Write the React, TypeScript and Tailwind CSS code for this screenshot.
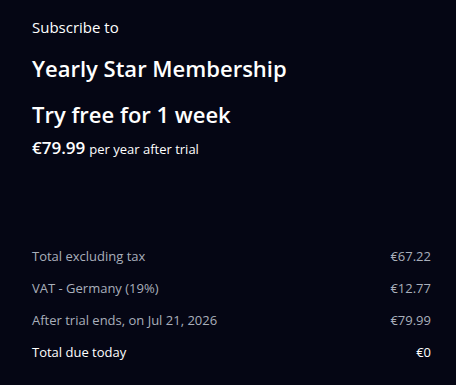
const rows = [
  { label: 'Total excluding tax', value: '€67.22' },
  { label: 'VAT - Germany (19%)', value: '€12.77' },
  { label: 'After trial ends, on Jul 21, 2026', value: '€79.99' },
]

export default function App() {
  return (
    <div
      className="h-[385px] w-[456px] bg-[#050614] pl-8 pr-[25px] text-white"
      style={{ fontFamily: '"Open Sans", "Noto Sans", sans-serif' }}
    >
      {/* Header */}
      <div className="pt-[17px]">
        <div className="text-[15px] leading-[20px]">Subscribe to</div>
        <h1 className="mt-[16px] text-[22px] font-semibold leading-[30px]">Yearly Star Membership</h1>
        <h2 className="mt-[15px] text-[22px] font-semibold leading-[32px]">Try free for 1 week</h2>
        <div className="mt-[5px] flex items-baseline gap-1">
          <span className="text-[17px] font-semibold">€79.99</span>
          <span className="text-[13px]">per year after trial</span>
        </div>
      </div>

      {/* Summary */}
      <div className="mt-[80px] flex flex-col text-[13px]">
        {rows.map((row) => (
          <div key={row.label} className="flex h-8 items-center justify-between text-[#a9afbb]">
            <span>{row.label}</span>
            <span>{row.value}</span>
          </div>
        ))}
        <div className="flex h-8 items-center justify-between text-white">
          <span>Total due today</span>
          <span>€0</span>
        </div>
      </div>
    </div>
  )
}
